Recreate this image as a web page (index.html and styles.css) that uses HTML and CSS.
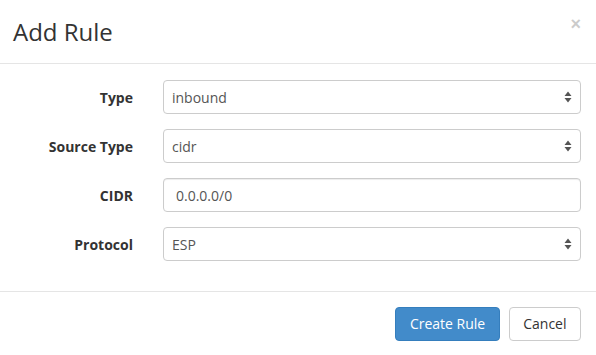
FILE: index.html
```html
<!DOCTYPE html>
<html lang="en">
<head>
    <meta charset="UTF-8">
    <title>Add Rule</title>
    <link rel="stylesheet" href="styles.css">
</head>
<body>
    <div class="modal">
        <!-- En-tête -->
        <div class="modal-header">
            <h4 class="modal-title">Add Rule</h4>
            <button class="close" type="button">&times;</button>
        </div>

        <!-- Formulaire -->
        <div class="modal-body">
            <div class="form-group">
                <label>Type</label>
                <div class="select-wrap">
                    <select class="form-control"><option>inbound</option></select>
                    <svg class="arrows" width="8" height="12" viewBox="0 0 8 12"><path d="M4 0.5 L7.5 5 H0.5 Z M4 11.5 L7.5 7 H0.5 Z" fill="#555"/></svg>
                </div>
            </div>
            <div class="form-group">
                <label>Source Type</label>
                <div class="select-wrap">
                    <select class="form-control"><option>cidr</option></select>
                    <svg class="arrows" width="8" height="12" viewBox="0 0 8 12"><path d="M4 0.5 L7.5 5 H0.5 Z M4 11.5 L7.5 7 H0.5 Z" fill="#555"/></svg>
                </div>
            </div>
            <div class="form-group">
                <label>CIDR</label>
                <input class="form-control text" type="text" value="0.0.0.0/0">
            </div>
            <div class="form-group">
                <label>Protocol</label>
                <div class="select-wrap">
                    <select class="form-control"><option>ESP</option></select>
                    <svg class="arrows" width="8" height="12" viewBox="0 0 8 12"><path d="M4 0.5 L7.5 5 H0.5 Z M4 11.5 L7.5 7 H0.5 Z" fill="#555"/></svg>
                </div>
            </div>
        </div>

        <!-- Pied -->
        <div class="modal-footer">
            <button class="btn btn-primary" type="button">Create Rule</button>
            <button class="btn btn-default" type="button">Cancel</button>
        </div>
    </div>
</body>
</html>
```
FILE: styles.css
```css
body {
    font-family: "Open Sans", sans-serif;
    font-size: 14px;
    color: #333;
    margin: 0;
    padding: 0;
    background: #fff;
}
.modal {
    width: 596px;
}
.modal-header {
    display: flex;
    justify-content: space-between;
    align-items: flex-start;
    padding: 15px 15px 14px 13px;
    border-bottom: 1px solid #e5e5e5;
}
.modal-title {
    margin: 0;
    font-size: 24px;
    font-weight: 400;
    line-height: 34px;
}
.close {
    background: none;
    border: none;
    padding: 0;
    margin: 1px 0 0 0;
    font-family: "Liberation Sans", sans-serif;
    font-size: 18px;
    font-weight: bold;
    line-height: 16px;
    color: #000;
    opacity: 0.2;
    cursor: pointer;
}
.modal-body {
    padding: 16px 15px 15px 15px;
}
.form-group {
    display: flex;
    align-items: center;
    gap: 30px;
    margin-bottom: 15px;
}
.form-group label {
    width: 118px;
    text-align: right;
    font-weight: 700;
}
.select-wrap {
    position: relative;
    flex: 1;
}
.form-control {
    box-sizing: border-box;
    width: 100%;
    height: 34px;
    font-family: "Open Sans", sans-serif;
    font-size: 14px;
    color: #555;
    background: #fff;
    border: 1px solid #ccc;
    border-radius: 4px;
    box-shadow: inset 0 1px 1px rgba(0, 0, 0, 0.075);
}
select.form-control {
    appearance: none;
    -webkit-appearance: none;
    padding: 0 8px;
    box-shadow: none;
}
.form-control.text {
    flex: 1;
    padding: 6px 12px;
}
.arrows {
    position: absolute;
    right: 9px;
    top: 11px;
    pointer-events: none;
}
.modal-footer {
    display: flex;
    justify-content: flex-end;
    gap: 9px;
    padding: 15px 15px 15px 15px;
    border-top: 1px solid #e5e5e5;
}
.btn {
    height: 34px;
    padding: 6px 13.5px;
    font-family: "Open Sans", sans-serif;
    font-size: 14px;
    line-height: 20px;
    border-radius: 4px;
    border: 1px solid transparent;
    cursor: pointer;
}
.btn-primary {
    background: #428bca;
    border-color: #357ebd;
    color: #fff;
}
.btn-default {
    background: #fff;
    border-color: #ccc;
    color: #333;
}
```
